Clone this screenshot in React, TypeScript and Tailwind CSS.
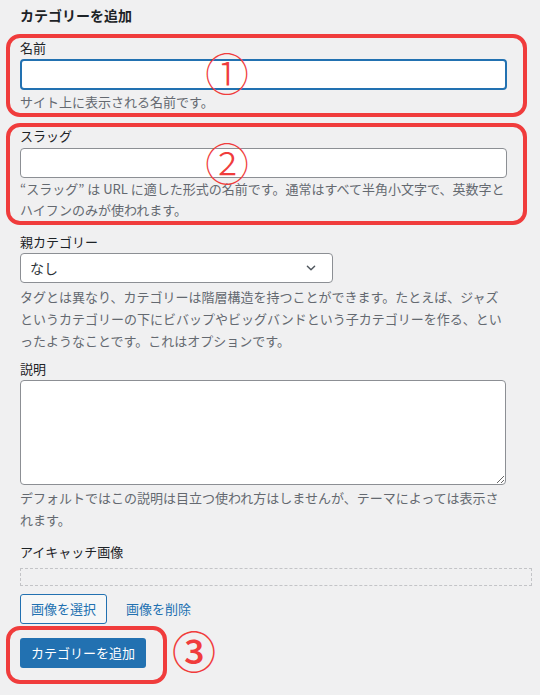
import React from "react";

const font = { fontFamily: '"Noto Sans CJK JP", "Noto Sans", sans-serif' };

function Marker({ n, className }: { n: string; className: string }) {
  return (
    <span
      className={`pointer-events-none absolute h-[36px] overflow-visible text-[44px] leading-[36px] text-[#f03c3c] ${className}`}
    >
      {n}
    </span>
  );
}

function Help({ children, lh = "leading-[22px]" }: { children: React.ReactNode; lh?: string }) {
  return <p className={`w-[487px] text-[13px] text-[#646970] ${lh}`}>{children}</p>;
}

function Label({ children }: { children: React.ReactNode }) {
  return <label className="block text-[13px] leading-[18px] text-[#1d2327]">{children}</label>;
}

export default function App() {
  return (
    <div className="min-h-[695px] w-[540px] bg-[#f0f0f1] pl-[20px] pr-[8px]" style={font}>
      <h2 className="pt-[5px] text-[14px] font-bold leading-[20px] text-[#1d2327]">
        カテゴリーを追加
      </h2>

      {/* 1: name */}
      <div className="relative -ml-[14px] mr-[5px] mt-[9px] rounded-[14px] border-4 border-[#f03c3c] pl-[10px] pt-px">
        <Label>名前</Label>
        <input
          type="text"
          className="mt-[2px] block h-[31px] w-[487px] rounded-[4px] border-2 border-[#2271b1] bg-white px-2 text-[14px] outline-none"
        />
        <div className="mt-px">
          <Help>サイト上に表示される名前です。</Help>
        </div>
        <Marker n="①" className="left-[195px] top-[16px] font-light" />
      </div>

      {/* 2: slug */}
      <div className="relative -ml-[14px] mr-[5px] mt-[6px] rounded-[14px] border-4 border-[#f03c3c] pb-px pl-[10px]">
        <Label>スラッグ</Label>
        <input
          type="text"
          className="mt-[3px] block h-[30px] w-[487px] rounded-[4px] border border-[#8c8f94] bg-white px-2 text-[14px] outline-none"
        />
        <Help lh="leading-[21px]">
          “スラッグ” は URL に適した形式の名前です。通常はすべて半角小文字で、英数字とハイフンのみが使われます。
        </Help>
        <Marker n="②" className="left-[195px] top-[17px] font-light" />
      </div>

      {/* parent */}
      <div className="mt-[8px]">
        <Label>親カテゴリー</Label>
        <div className="mt-[2px] flex h-[30px] w-[313px] items-center justify-between rounded-[4px] border border-[#8c8f94] bg-white pl-[9px] pr-[15px] text-[14px] text-[#2c3338]">
          <span>なし</span>
          <svg width="12" height="12" viewBox="0 0 20 20" fill="none" stroke="#50575e" strokeWidth="2.4" strokeLinecap="round" strokeLinejoin="round">
            <path d="M4 7l6 6 6-6" />
          </svg>
        </div>
        <div className="mt-[3px]">
          <Help>
            タグとは異なり、カテゴリーは階層構造を持つことができます。たとえば、ジャズというカテゴリーの下にビバップやビッグバンドという子カテゴリーを作る、といったようなことです。これはオプションです。
          </Help>
        </div>
      </div>

      {/* description */}
      <div className="mt-[8px]">
        <Label>説明</Label>
        <textarea className="mt-[2px] block h-[105px] w-[486px] rounded-[4px] border border-[#8c8f94] bg-white px-2 py-1 text-[14px] outline-none" />
        <div className="mt-[2px]">
          <Help>デフォルトではこの説明は目立つ使われ方はしませんが、テーマによっては表示されます。</Help>
        </div>
      </div>

      {/* eyecatch */}
      <div className="mt-[12px]">
        <Label>アイキャッチ画像</Label>
        <div className="mt-[7px] h-[18px] w-[512px] border border-dashed border-[#c3c4c7]" />
        <div className="mt-[8px] flex items-center gap-[19px]">
          <button className="h-[30px] rounded-[3px] border border-[#2271b1] bg-[#f6f7f7] px-[10px] text-[13px] text-[#2271b1]">
            画像を選択
          </button>
          <a className="text-[13px] text-[#2271b1]">画像を削除</a>
        </div>
      </div>

      {/* 3: submit */}
      <div className="relative mt-[2px] -ml-[14px] w-[161px] rounded-[14px] border-4 border-[#f03c3c] pb-[12px] pl-[10px] pt-[8px]">
        <button className="h-[30px] w-[126px] rounded-[3px] bg-[#2271b1] text-[13px] text-white">
          カテゴリーを追加
        </button>
        <Marker n="③" className="left-[162px] top-[2px] font-medium" />
      </div>
    </div>
  );
}
